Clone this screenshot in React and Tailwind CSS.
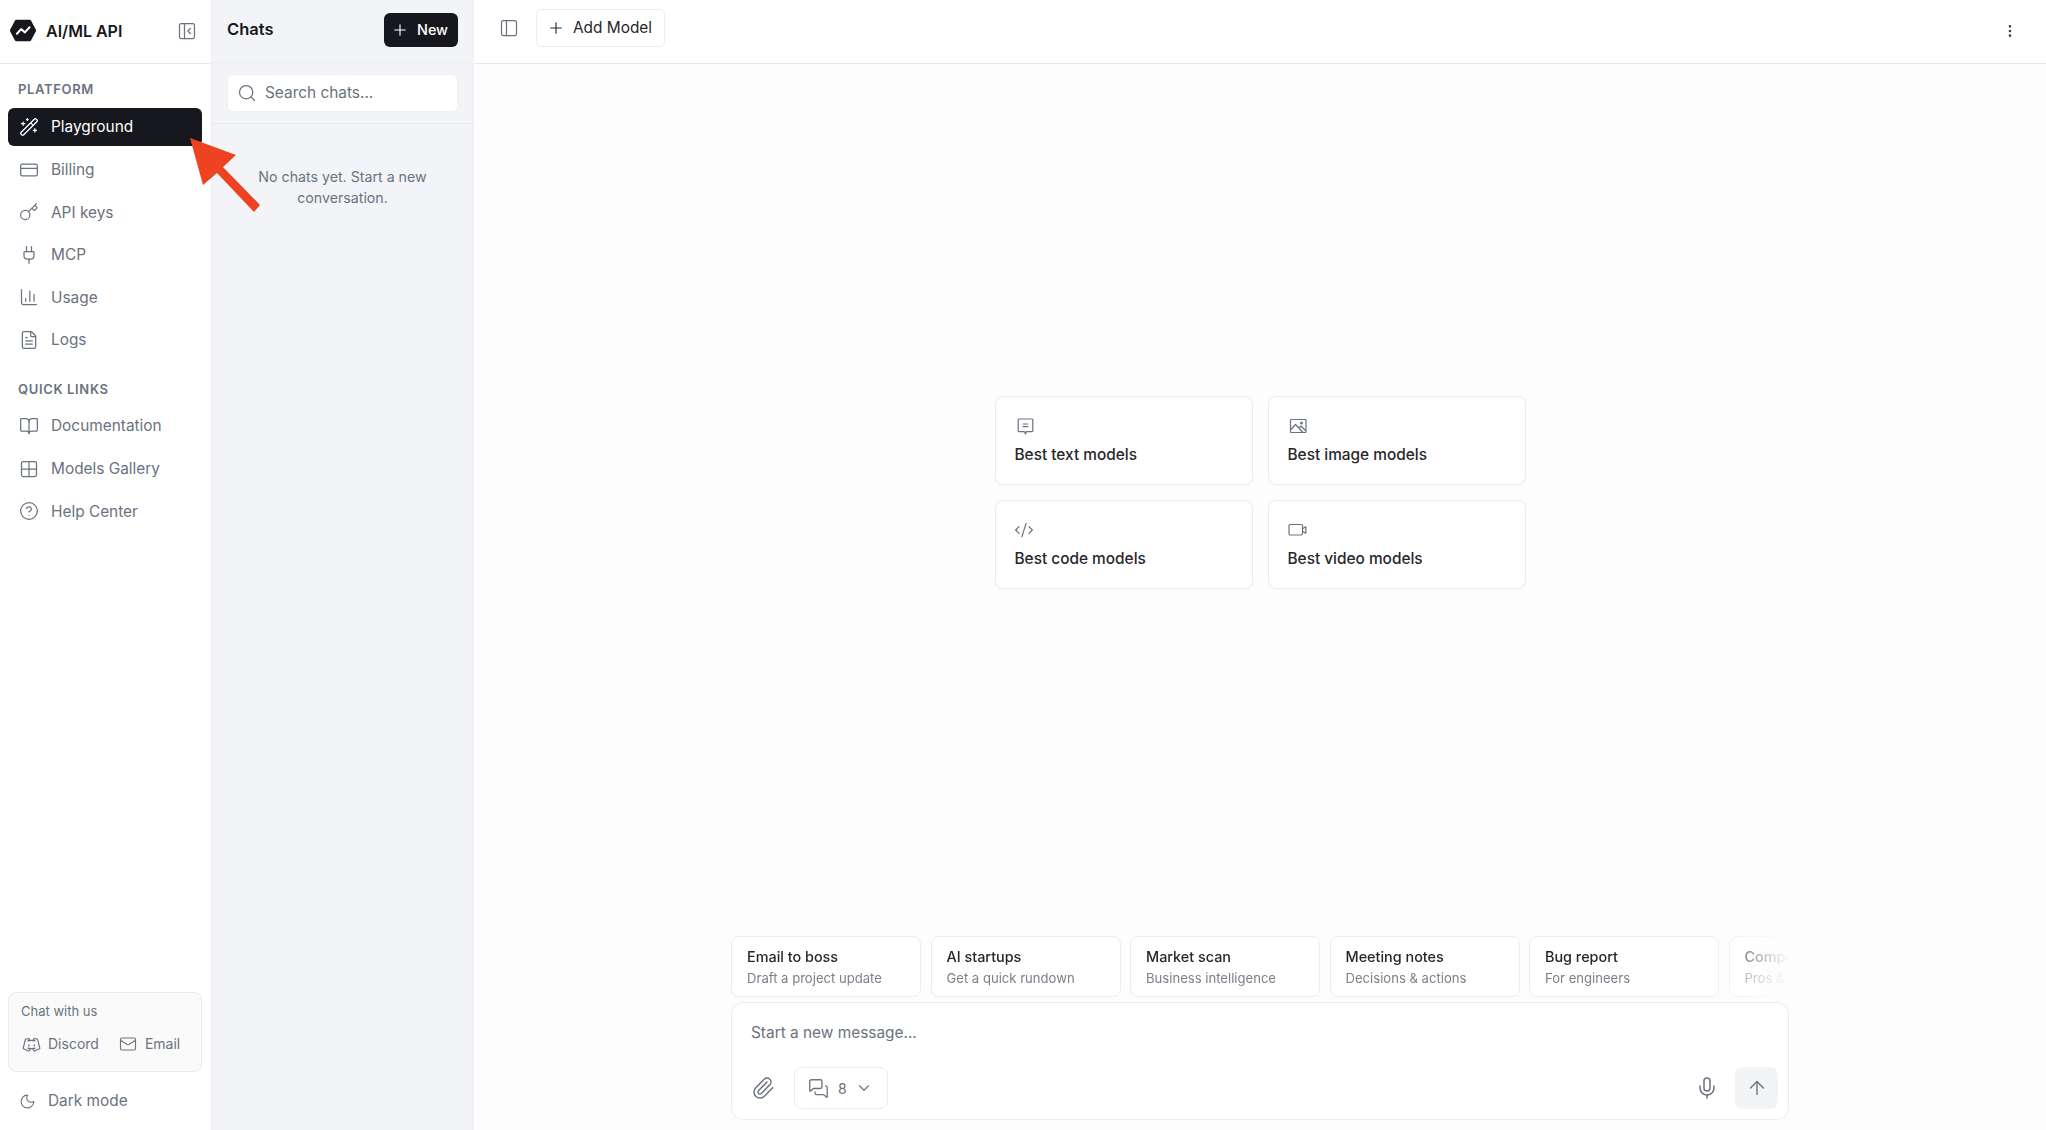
import {
  ArrowUp,
  BookOpen,
  ChartColumn,
  ChevronDown,
  CircleHelp,
  CodeXml,
  CreditCard,
  EllipsisVertical,
  FileText,
  Grid2x2,
  Key,
  Mail,
  MessagesSquare,
  Mic,
  Moon,
  PanelLeft,
  PanelLeftClose,
  Paperclip,
  Plug,
  Plus,
  Search,
  WandSparkles,
} from 'lucide-react';
import { PiDiscordLogo } from 'react-icons/pi';

const platformLinks = [
  { label: 'Playground', icon: WandSparkles, active: true },
  { label: 'Billing', icon: CreditCard },
  { label: 'API keys', icon: Key },
  { label: 'MCP', icon: Plug },
  { label: 'Usage', icon: ChartColumn },
  { label: 'Logs', icon: FileText },
];

const quickLinks = [
  { label: 'Documentation', icon: BookOpen },
  { label: 'Models Gallery', icon: Grid2x2 },
  { label: 'Help Center', icon: CircleHelp },
];

// these three are thinner and boxier than anything in the icon packages
function TextIcon() {
  return (
    <svg width="20" height="20" viewBox="0 0 20 20" fill="none" stroke="#6b7280" strokeWidth="1.2" strokeLinejoin="round">
      <path d="M4 3h13a.8.8 0 0 1 .8.8v11a.8.8 0 0 1-.8.8h-5.5L10.5 18l-1-2.4H4a.8.8 0 0 1-.8-.8v-11A.8.8 0 0 1 4 3z" />
      <path d="M7.7 8h5.6M7.7 10.7h5.6" />
    </svg>
  );
}

function ImageIcon() {
  return (
    <svg width="20" height="20" viewBox="0 0 20 20" fill="none" stroke="#6b7280" strokeWidth="1.2" strokeLinejoin="round">
      <rect x="2.5" y="3.5" width="15.5" height="13" rx="0.8" />
      <path d="M2.5 14l5-5.5 7.5 8M11 12l2-2 5 5" />
      <circle cx="13.5" cy="7" r="0.9" />
    </svg>
  );
}

function VideoIcon() {
  return (
    <svg width="20" height="20" viewBox="0 0 20 20" fill="none" stroke="#6b7280" strokeWidth="1.2" strokeLinejoin="round">
      <rect x="1" y="4.5" width="13.5" height="10.5" rx="1.2" />
      <path d="M14.5 8.7l3.3-2v6.6l-3.3-2" />
    </svg>
  );
}

function CodeIcon() {
  return <CodeXml size={20} strokeWidth={1.5} className="-ml-[1px] text-[#6b7280]" />;
}

const modelCards = [
  { label: 'Best text models', icon: TextIcon },
  { label: 'Best image models', icon: ImageIcon },
  { label: 'Best code models', icon: CodeIcon },
  { label: 'Best video models', icon: VideoIcon },
];

const prompts = [
  { title: 'Email to boss', sub: 'Draft a project update' },
  { title: 'AI startups', sub: 'Get a quick rundown' },
  { title: 'Market scan', sub: 'Business intelligence' },
  { title: 'Meeting notes', sub: 'Decisions & actions' },
  { title: 'Bug report', sub: 'For engineers' },
  { title: 'Compare', sub: 'Pros & cons' },
];

function Logo() {
  return (
    <svg width="28" height="25" viewBox="0 0 30 26" className="shrink-0">
      <path d="M8 1.5h14a2 2 0 0 1 1.7 1l5 9.5a2 2 0 0 1 0 2l-5 9.5a2 2 0 0 1-1.7 1H8a2 2 0 0 1-1.7-1l-5-9.5a2 2 0 0 1 0-2l5-9.5a2 2 0 0 1 1.7-1z" fill="#16181d" />
      <path d="M8.5 16.5l4.5-5 4 3.5 5-5.5" fill="none" stroke="#fff" strokeWidth="2.2" strokeLinecap="round" strokeLinejoin="round" />
    </svg>
  );
}

function NavItem({ item }) {
  const Icon = item.icon;
  return (
    <div
      className={`flex h-[38px] items-center gap-[12px] rounded-md pl-[11px] text-[15.4px] ${
        item.active ? 'bg-[#16181d] text-white' : 'text-[#6b7280]'
      }`}
    >
      <Icon size={20} strokeWidth={1.5} />
      <span>{item.label}</span>
    </div>
  );
}

function SectionLabel({ children }) {
  return (
    <p className="px-[10px] text-[13px] leading-5 font-semibold tracking-[0.05em] text-[#6b7280]">{children}</p>
  );
}

function Sidebar() {
  return (
    <aside className="flex w-[212px] shrink-0 flex-col border-r border-[#eceef1] bg-white">
      <div className="flex h-[64px] shrink-0 items-center border-b border-[#e8e9ec] pr-[14px] pb-[2px] pl-[9px]">
        <Logo />
        <span className="ml-[9px] text-[16px] font-semibold text-[#16181d]">AI/ML API</span>
        <PanelLeftClose size={20} strokeWidth={1.5} className="ml-auto text-[#6b7280]" />
      </div>
      <nav className="flex flex-col pt-[15px] pr-[9px] pl-[8px]">
        <SectionLabel>PLATFORM</SectionLabel>
        <div className="mt-[9px] flex flex-col gap-[4.6px]">
          {platformLinks.map((item) => (
            <NavItem key={item.label} item={item} />
          ))}
        </div>
        <div className="mt-[20px]">
          <SectionLabel>QUICK LINKS</SectionLabel>
        </div>
        <div className="mt-[8px] flex flex-col gap-[4.6px]">
          {quickLinks.map((item) => (
            <NavItem key={item.label} item={item} />
          ))}
        </div>
      </nav>
      <div className="mt-auto pr-[9px] pb-[18px] pl-[8px]">
        <div className="h-[80px] rounded-lg border border-[#ececef] bg-[#fafafa] px-[12px] pt-[8px]">
          <p className="text-[13px] leading-5 text-[#6b7280]">Chat with us</p>
          <div className="mt-[13px] flex items-center text-[14px] leading-5 text-[#6b7280]">
            <PiDiscordLogo size={19} className="mr-[7px] ml-px" />
            <span>Discord</span>
            <Mail size={18} strokeWidth={1.5} className="mr-[8px] ml-[20px]" />
            <span>Email</span>
          </div>
        </div>
        <div className="mt-[18px] flex h-[22px] items-center gap-[12px] pl-[11px] text-[15.4px] text-[#6b7280]">
          <Moon size={17} strokeWidth={1.5} />
          <span>Dark mode</span>
        </div>
      </div>
    </aside>
  );
}

function ChatsPanel() {
  return (
    <section className="flex w-[262px] shrink-0 flex-col border-r border-[#eceef1] bg-[#f3f4f7]">
      <div className="flex h-[63px] shrink-0 items-center justify-between border-b border-[#eceef1] px-[15px] pb-[3px]">
        <span className="text-[16.5px] font-semibold text-[#16181d]">Chats</span>
        <button className="flex h-[34px] w-[74px] items-center gap-[8px] rounded-md bg-[#16181d] pl-[7px] text-[14.4px] font-medium text-white">
          <Plus size={18} strokeWidth={1.5} />
          New
        </button>
      </div>
      <div className="border-b border-[#e8e9ec] px-[15px] pt-[11px] pb-[11px]">
        <div className="flex h-[38px] items-center gap-[8px] rounded-md border border-[#f0f1f3] bg-white pl-[9px] text-[15.4px] text-[#6b7280]">
          <Search size={20} strokeWidth={1.5} />
          <span>Search chats...</span>
        </div>
      </div>
      <p className="mx-auto mt-[42px] w-[190px] text-center text-[14.2px] leading-[21px] text-[#6b7280]">
        No chats yet. Start a new conversation.
      </p>
    </section>
  );
}

function ModelCard({ card }) {
  const Icon = card.icon;
  return (
    <div className="h-[89px] rounded-lg border border-[#ececef] bg-white px-[19px] pt-[19px]">
      <div className="flex h-[20px] items-center">
        <Icon />
      </div>
      <p className="mt-[8px] text-[15.4px] leading-[22px] font-medium text-[#27272a]">{card.label}</p>
    </div>
  );
}

function PromptChip({ prompt }) {
  return (
    <div className="h-[61px] w-[190px] shrink-0 rounded-lg border border-[#ececef] bg-white pt-[10px] pl-[15px]">
      <p className="text-[14.4px] leading-5 font-medium whitespace-nowrap text-[#27272a]">{prompt.title}</p>
      <p className="mt-px text-[13.1px] leading-5 whitespace-nowrap text-[#7b808a]">{prompt.sub}</p>
    </div>
  );
}

function Composer() {
  return (
    <div className="h-[118px] rounded-xl border border-[#ececef] bg-white px-[10px] pt-[19px]">
      <p className="pl-[9px] text-[15.4px] leading-[22px] text-[#6b7280]">Start a new message...</p>
      <div className="mt-[23px] flex items-center">
        <Paperclip size={24} strokeWidth={1.5} className="ml-[9px] text-[#6b7280]" />
        <button className="ml-[19px] flex h-[42px] w-[94px] items-center rounded-lg border border-[#ececef] pl-[13px] text-[14px] text-[#6b7280]">
          <MessagesSquare size={21} strokeWidth={1.5} />
          <span className="ml-[9px]">8</span>
          <ChevronDown size={18} strokeWidth={1.5} className="ml-[8px]" />
        </button>
        <Mic size={24} strokeWidth={1.5} className="mr-[16px] ml-auto text-[#6b7280]" />
        <button className="flex h-[42px] w-[43px] items-center justify-center rounded-lg bg-[#f3f4f6] text-[#6b7280]">
          <ArrowUp size={22} strokeWidth={1.5} />
        </button>
      </div>
    </div>
  );
}

function MainPanel() {
  return (
    <main className="flex min-w-0 flex-1 flex-col bg-[#fdfdfd]">
      <header className="flex h-[64px] shrink-0 items-center border-b border-[#e8e9ec] bg-white pr-[28px] pb-[7px] pl-[25px]">
        <PanelLeft size={20} strokeWidth={1.5} className="text-[#6b7280]" />
        <button className="ml-[17px] flex h-[38px] w-[129px] items-center gap-[8px] rounded-md border border-[#ececef] pl-[10px] text-[15.4px] text-[#27272a]">
          <Plus size={18} strokeWidth={1.5} />
          Add Model
        </button>
        <EllipsisVertical size={16} strokeWidth={2} className="mt-[6px] ml-auto text-[#3f3f46]" />
      </header>
      <div className="flex flex-1 items-center justify-center pb-[15px]">
        <div className="grid w-[531px] grid-cols-2 gap-x-[15px] gap-y-[15px]">
          {modelCards.map((card) => (
            <ModelCard key={card.label} card={card} />
          ))}
        </div>
      </div>
      <div className="mx-auto w-[1058px] pb-[10px]">
        <div className="flex gap-[9.5px] overflow-hidden [mask-image:linear-gradient(to_right,black_92%,transparent_100%)]">
          {prompts.map((prompt) => (
            <PromptChip key={prompt.title} prompt={prompt} />
          ))}
        </div>
        <div className="mt-[5px]">
          <Composer />
        </div>
      </div>
    </main>
  );
}

export default function App() {
  return (
    <div className="relative flex h-screen w-full overflow-hidden font-['Inter',sans-serif]">
      <Sidebar />
      <ChatsPanel />
      <MainPanel />
      <svg width="80" height="80" viewBox="185 135 80 80" className="absolute top-[135px] left-[185px]">
        <path d="M190 138L236 155L223 167L260 205L254 212L217 173L203 185Z" fill="#ee4322" />
      </svg>
    </div>
  );
}
